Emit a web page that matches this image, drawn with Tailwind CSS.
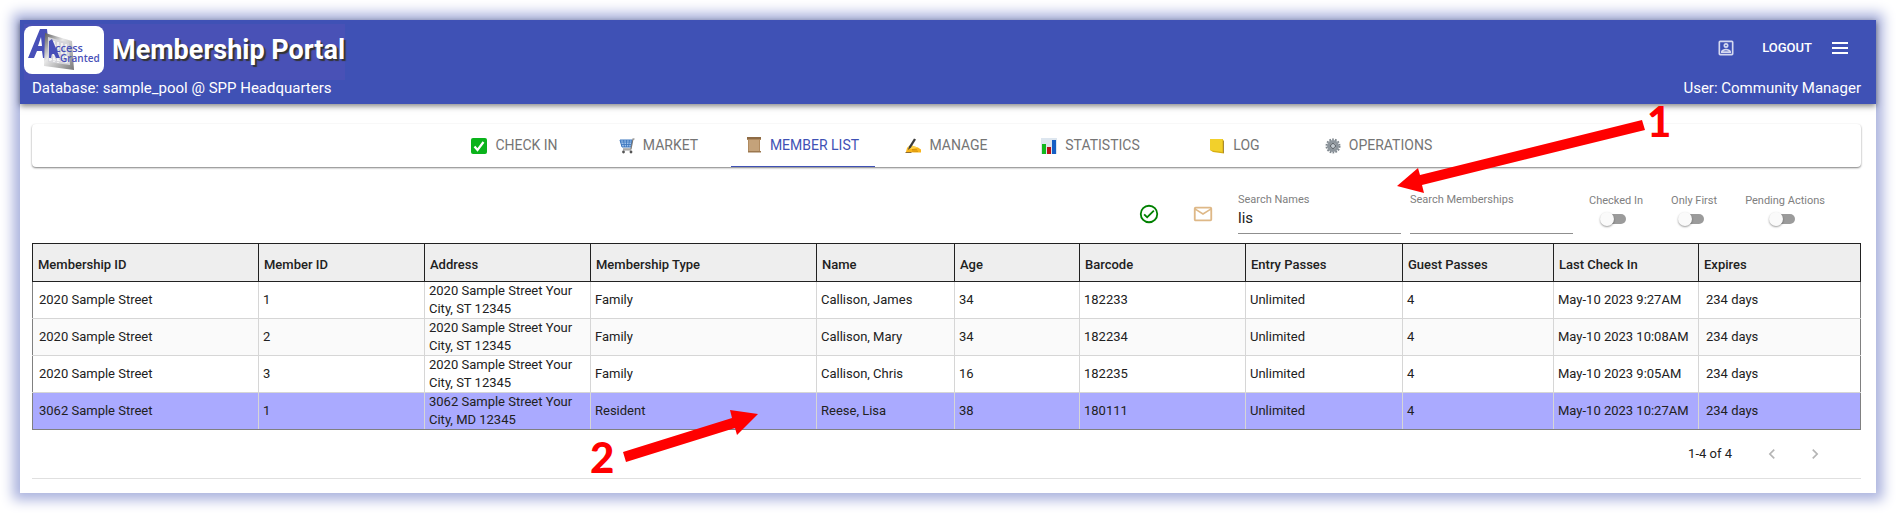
<!DOCTYPE html>
<html lang="en">
<head>
    <meta charset="UTF-8">
    <meta name="viewport" content="width=device-width, initial-scale=1.0">
    <title>Membership Portal</title>
    <script src="https://cdn.jsdelivr.net/npm/@tailwindcss/browser@4"></script>
</head>
<body class="relative bg-white p-5 font-[Roboto,sans-serif] text-[#212121]">
    <div class="bg-white shadow-[0_0_12px_7px_#abb3de]">
        <header class="relative bg-[#3f51b5] pt-1 pb-2 text-white shadow-[0_2px_6px_rgba(0,0,0,0.5)]">
            <div class="flex items-center justify-between pr-6 pl-1">
                <div class="flex h-14 items-center gap-2 bg-[#4951b6] pb-1">
                    <svg class="h-12 w-20 rounded-lg bg-white" viewBox="0 0 80 48" role="img" aria-label="Access Granted">
                        <defs>
                            <linearGradient id="door" x1="0" y1="0" x2="1" y2="1">
                                <stop offset="0" stop-color="#555"/>
                                <stop offset="0.4" stop-color="#e8e8e8"/>
                                <stop offset="1" stop-color="#777"/>
                            </linearGradient>
                        </defs>
                        <path d="M4 32 16 3h7l3 29h-7l-1-7h-5l-3 7zM14 20h4l-1-9z" fill="#4850b8" fill-rule="evenodd"/>
                        <path d="M21 7 48 15 50 44 20 40z" fill="url(#door)"/>
                        <path d="M24 11 45 17 46 39 24 36z" fill="#d5d5da"/>
                        <path d="M26 14v21M30 15v21M34 16v21M38 17v20M42 18v20M25 33l20 3M25 29l20 3M25 18l18 4" stroke="#f7f7f7" stroke-width="1.5" stroke-dasharray="3 1"/>
                        <path d="M25 32V15l3-2 8 19h-4l-2-4h-2l-1 4z" fill="#4850b8"/>
                        <text x="31" y="26" font-family="Open Sans, sans-serif" font-size="11" font-weight="600" fill="#4850b8">ccess</text>
                        <text x="36" y="36" font-family="Open Sans, sans-serif" font-size="10" font-weight="600" fill="#4850b8">Granted</text>
                    </svg>
                    <h1 class="text-[27px] leading-8 font-bold [text-shadow:2px_2px_1px_#333]">Membership Portal</h1>
                </div>
                <div class="flex items-center pb-2">
                    <button type="button" aria-label="Account" class="mr-[26px] block">
                        <svg class="size-5" viewBox="0 0 24 24" fill="#d5d9f0"><path d="M19 3H5a2 2 0 0 0-2 2v14a2 2 0 0 0 2 2h14a2 2 0 0 0 2-2V5a2 2 0 0 0-2-2zm0 16H5V5h14v14zM12 12a3 3 0 1 0 0-6 3 3 0 0 0 0 6zm0-4a1 1 0 1 1 0 2 1 1 0 0 1 0-2zm6 8.600c0-2.500-4-3.600-6-3.600s-6 1.100-6 3.600V18h12v-1.400zM8.500 16c.7-.6 2.200-1 3.500-1s2.800.4 3.500 1h-7z"/></svg>
                    </button>
                    <button type="button" class="mr-4 text-[13px] leading-5 font-medium">LOGOUT</button>
                    <button type="button" aria-label="Menu" class="block">
                        <svg class="size-6" viewBox="0 0 24 24" fill="white"><path d="M4 6h16v2H4zM4 11h16v2H4zM4 16h16v2H4z"/></svg>
                    </button>
                </div>
            </div>
            <div class="flex justify-between pr-[15px] pl-3 text-[15px] leading-4">
                <span>Database: sample_pool @ SPP Headquarters</span>
                <span>User: Community Manager</span>
            </div>
        </header>

        <main class="pt-5 pr-[15px] pb-[14px] pl-3">
            <nav class="flex h-[43px] justify-center rounded text-[14px] text-[#757575] shadow-[0_1px_2px_rgba(0,0,0,0.5)]">
                <button type="button" class="flex w-36 items-center justify-center gap-2">
                    <svg class="size-4" viewBox="0 0 16 16"><rect width="16" height="16" rx="2" fill="#0ab31b"/><path d="m3.500 8.500 3 3.500L12.500 4" fill="none" stroke="white" stroke-width="2.200"/></svg>
                    CHECK IN
                </button>
                <button type="button" class="flex w-36 items-center justify-center gap-2">
                    <svg class="size-4" viewBox="0 0 16 16" fill="none"><path d="M1 2h12l-1 7H3z" fill="#9dc0ea" stroke="#3974bd"/><path d="M1.500 4h11M2 6.500h10M4.500 2l1 7M7.500 2v7M10.500 2l-1 7" stroke="#3974bd" stroke-width=".8"/><path d="M15.500 1H14l-2 10H4" stroke="#777" stroke-width="1.200"/><path d="M4 12h8" stroke="#999"/><circle cx="4.500" cy="14" r="1.400" fill="#555"/><circle cx="12" cy="14" r="1.400" fill="#555"/></svg>
                    MARKET
                </button>
                <button type="button" aria-current="page" class="flex w-36 items-center justify-center gap-2 border-b border-[#3f51b5] text-[#3f51b5]">
                    <svg class="size-4" viewBox="0 0 16 16"><path d="M1 0h14v3h-1v12L2 14.500V3H1z" fill="#b08a5f"/><path d="M3 3h10v11H3z" fill="#c4a27a"/><path d="M1 0h14v2H1z" fill="#8e6b45"/><path d="M2 14h13v1.500H2z" fill="#9b774e"/></svg>
                    MEMBER LIST
                </button>
                <button type="button" class="flex w-36 items-center justify-center gap-2">
                    <svg class="size-4" viewBox="0 0 16 16"><path d="M1 14 2 10 6 6.500 8 8l5 1.500 3 2v3L9 14.500z" fill="#f9b51a"/><path d="M2 10 6 6.500 8 8l5 1.500-6 1.500z" fill="#fdd14a"/><path d="M7 11.500l5 .3M7 13l6 .3" stroke="#c98708" stroke-width=".8"/><path d="M9 .5 11 1.500 6 9.500 3 12l1-3.500z" fill="#3b3b3b"/><path d="M.5 14.500h6" stroke="#8a6a35"/></svg>
                    MANAGE
                </button>
                <button type="button" class="flex w-36 items-center justify-center gap-2">
                    <svg class="size-4" viewBox="0 0 16 16"><path d="M0 0h16v16H0z" fill="#dde6ef"/><path d="M1 6h4v10H1z" fill="#12b81e"/><path d="M6 9h4v7H6z" fill="#b9121a"/><path d="M11 2h4v14h-4z" fill="#155ec4"/></svg>
                    STATISTICS
                </button>
                <button type="button" class="flex w-36 items-center justify-center gap-2">
                    <svg class="size-4" viewBox="0 0 16 16"><path d="M1 1h12.500l1.500 2v12.500l-11-1.500L1 12z" fill="#d7ae10"/><path d="M1 1h12.500v13L3 12.500 1 12z" fill="#f2d02b"/><path d="M14.500 3v12" stroke="#a78a35"/></svg>
                    LOG
                </button>
                <button type="button" class="flex w-36 items-center justify-center gap-2">
                    <svg class="size-4" viewBox="0 0 16 16" fill="none"><circle cx="8" cy="8" r="6.500" stroke="#7d858c" stroke-width="2" stroke-dasharray="1.700 1.200"/><circle cx="8" cy="8" r="4.500" stroke="#8d959c" stroke-width="3"/><circle cx="8" cy="8" r="2.500" fill="#c4cbd1" stroke="#4c5359"/></svg>
                    OPERATIONS
                </button>
            </nav>

            <div class="flex h-[76px] justify-end pr-9 text-[11px] text-[#808080]">
                <button type="button" aria-label="Show checked in" class="mt-[18px] mr-8 self-center">
                    <svg class="size-[22px]" viewBox="0 0 24 24" fill="#008000"><path d="M12 2a10 10 0 1 0 0 20 10 10 0 0 0 0-20zm0 18a8 8 0 1 1 0-16 8 8 0 0 1 0 16zm4.600-12.400L10 14.200l-2.600-2.600L6 13l4 4 8-8z"/></svg>
                </button>
                <button type="button" aria-label="Email members" class="mt-[18px] mr-6 self-center">
                    <svg class="size-[22px]" viewBox="0 0 24 24" fill="#deb887"><path d="M22 6a2 2 0 0 0-2-2H4a2 2 0 0 0-2 2v12c0 1.100.9 2 2 2h16a2 2 0 0 0 2-2V6zm-2 0-8 5-8-5h16zm0 12H4V8l8 5 8-5v10z"/></svg>
                </button>
                <div class="mr-[9px] flex w-[163px] flex-col pt-[26px]">
                    <label for="names" class="leading-[14px]">Search Names</label>
                    <input id="names" type="text" value="lis" class="h-[27px] w-full border-b border-[#8f8f8f] pb-1 text-[15px] text-[#212121] outline-none">
                </div>
                <div class="flex w-[163px] flex-col pt-[26px]">
                    <label for="memberships" class="leading-[14px]">Search Memberships</label>
                    <input id="memberships" type="text" class="h-[27px] w-full border-b border-[#8f8f8f] pb-1 text-[15px] text-[#212121] outline-none">
                </div>
                <label class="ml-4 flex flex-col items-center gap-1.5 pt-[27px] leading-[14px]">
                    Checked In
                    <input type="checkbox" role="switch" class="relative mr-1 block h-[10px] w-6 appearance-none rounded-full bg-[#9b9b9b] before:absolute before:-top-0.5 before:-left-0.5 before:size-[14px] before:rounded-full before:bg-[#fafafa] before:shadow-[0_1px_2px_rgba(0,0,0,0.4)] before:content-['']">
                </label>
                <label class="ml-7 flex flex-col items-center gap-1.5 pt-[27px] leading-[14px]">
                    Only First
                    <input type="checkbox" role="switch" class="relative mr-1 block h-[10px] w-6 appearance-none rounded-full bg-[#9b9b9b] before:absolute before:-top-0.5 before:-left-0.5 before:size-[14px] before:rounded-full before:bg-[#fafafa] before:shadow-[0_1px_2px_rgba(0,0,0,0.4)] before:content-['']">
                </label>
                <label class="ml-7 flex flex-col items-center gap-1.5 pt-[27px] leading-[14px]">
                    Pending Actions
                    <input type="checkbox" role="switch" class="relative mr-1 block h-[10px] w-6 appearance-none rounded-full bg-[#9b9b9b] before:absolute before:-top-0.5 before:-left-0.5 before:size-[14px] before:rounded-full before:bg-[#fafafa] before:shadow-[0_1px_2px_rgba(0,0,0,0.4)] before:content-['']">
                </label>
            </div>

            <table class="w-full table-fixed border-collapse border border-[#808080] text-left text-[13px] leading-[18px]">
                <colgroup>
                    <col class="w-[226px]">
                    <col class="w-[166px]">
                    <col class="w-[166px]">
                    <col class="w-[226px]">
                    <col class="w-[138px]">
                    <col class="w-[125px]">
                    <col class="w-[166px]">
                    <col class="w-[157px]">
                    <col class="w-[151px]">
                    <col class="w-[145px]">
                    <col class="w-[162px]">
                </colgroup>
                <thead>
                    <tr class="h-[38px] bg-[#eeeeee] [&>th]:border [&>th]:border-[#212121] [&>th]:px-[5px] [&>th]:pt-1 [&>th]:font-medium">
                        <th>Membership ID</th>
                        <th>Member ID</th>
                        <th>Address</th>
                        <th>Membership Type</th>
                        <th>Name</th>
                        <th>Age</th>
                        <th>Barcode</th>
                        <th>Entry Passes</th>
                        <th>Guest Passes</th>
                        <th>Last Check In</th>
                        <th>Expires</th>
                    </tr>
                </thead>
                <tbody class="[&_td]:border-r [&_td]:border-b [&_td]:border-[#d6d6d6] [&_td]:pr-1 [&_td]:pl-1 [&_td:first-child]:pl-1.5 [&_td:last-child]:border-r-[#808080] [&_td:last-child]:pl-[7px] [&>tr:last-child>td]:border-b-[#808080]">
                    <tr>
                        <td>2020 Sample Street</td>
                        <td>1</td>
                        <td>2020 Sample Street Your City, ST 12345</td>
                        <td>Family</td>
                        <td>Callison, James</td>
                        <td>34</td>
                        <td>182233</td>
                        <td>Unlimited</td>
                        <td>4</td>
                        <td>May-10 2023 9:27AM</td>
                        <td>234 days</td>
                    </tr>
                    <tr class="bg-[#fafafa]">
                        <td>2020 Sample Street</td>
                        <td>2</td>
                        <td>2020 Sample Street Your City, ST 12345</td>
                        <td>Family</td>
                        <td>Callison, Mary</td>
                        <td>34</td>
                        <td>182234</td>
                        <td>Unlimited</td>
                        <td>4</td>
                        <td>May-10 2023 10:08AM</td>
                        <td>234 days</td>
                    </tr>
                    <tr>
                        <td>2020 Sample Street</td>
                        <td>3</td>
                        <td>2020 Sample Street Your City, ST 12345</td>
                        <td>Family</td>
                        <td>Callison, Chris</td>
                        <td>16</td>
                        <td>182235</td>
                        <td>Unlimited</td>
                        <td>4</td>
                        <td>May-10 2023 9:05AM</td>
                        <td>234 days</td>
                    </tr>
                    <tr class="bg-[#aaaaff]">
                        <td>3062 Sample Street</td>
                        <td>1</td>
                        <td>3062 Sample Street Your City, MD 12345</td>
                        <td>Resident</td>
                        <td>Reese, Lisa</td>
                        <td>38</td>
                        <td>180111</td>
                        <td>Unlimited</td>
                        <td>4</td>
                        <td>May-10 2023 10:27AM</td>
                        <td>234 days</td>
                    </tr>
                </tbody>
            </table>

            <div class="flex h-[49px] items-center justify-end border-b border-[#e0e0e0] pr-9 text-[13px]">
                <span class="mr-[30px]">1-4 of 4</span>
                <button type="button" aria-label="Previous page" disabled class="mr-[23px]">
                    <svg class="size-5" viewBox="0 0 24 24" fill="#b5b5b5"><path d="M15.400 7.400 14 6l-6 6 6 6 1.400-1.400L10.800 12z"/></svg>
                </button>
                <button type="button" aria-label="Next page" disabled>
                    <svg class="size-5" viewBox="0 0 24 24" fill="#b5b5b5"><path d="M10 6 8.600 7.400l4.600 4.600-4.600 4.600L10 18l6-6z"/></svg>
                </button>
            </div>
        </main>
    </div>

    <!-- numbered callouts on top of the page -->
    <svg class="pointer-events-none absolute top-0 left-0 h-[513px] w-[1896px]" viewBox="0 0 1896 513" fill="#ff0000">
        <path d="M1642 120 1420 175 1418 168 1397 186 1424 193 1422 185 1645 130z"/>
        <path d="M623 452 732 418 730 410 758 414 737 435 735 428 626 462z"/>
        <text x="1647" y="137" font-family="Lato, sans-serif" font-size="42" font-weight="900">1</text>
        <text x="590" y="473" font-family="Lato, sans-serif" font-size="42" font-weight="900">2</text>
    </svg>
</body>
</html>
